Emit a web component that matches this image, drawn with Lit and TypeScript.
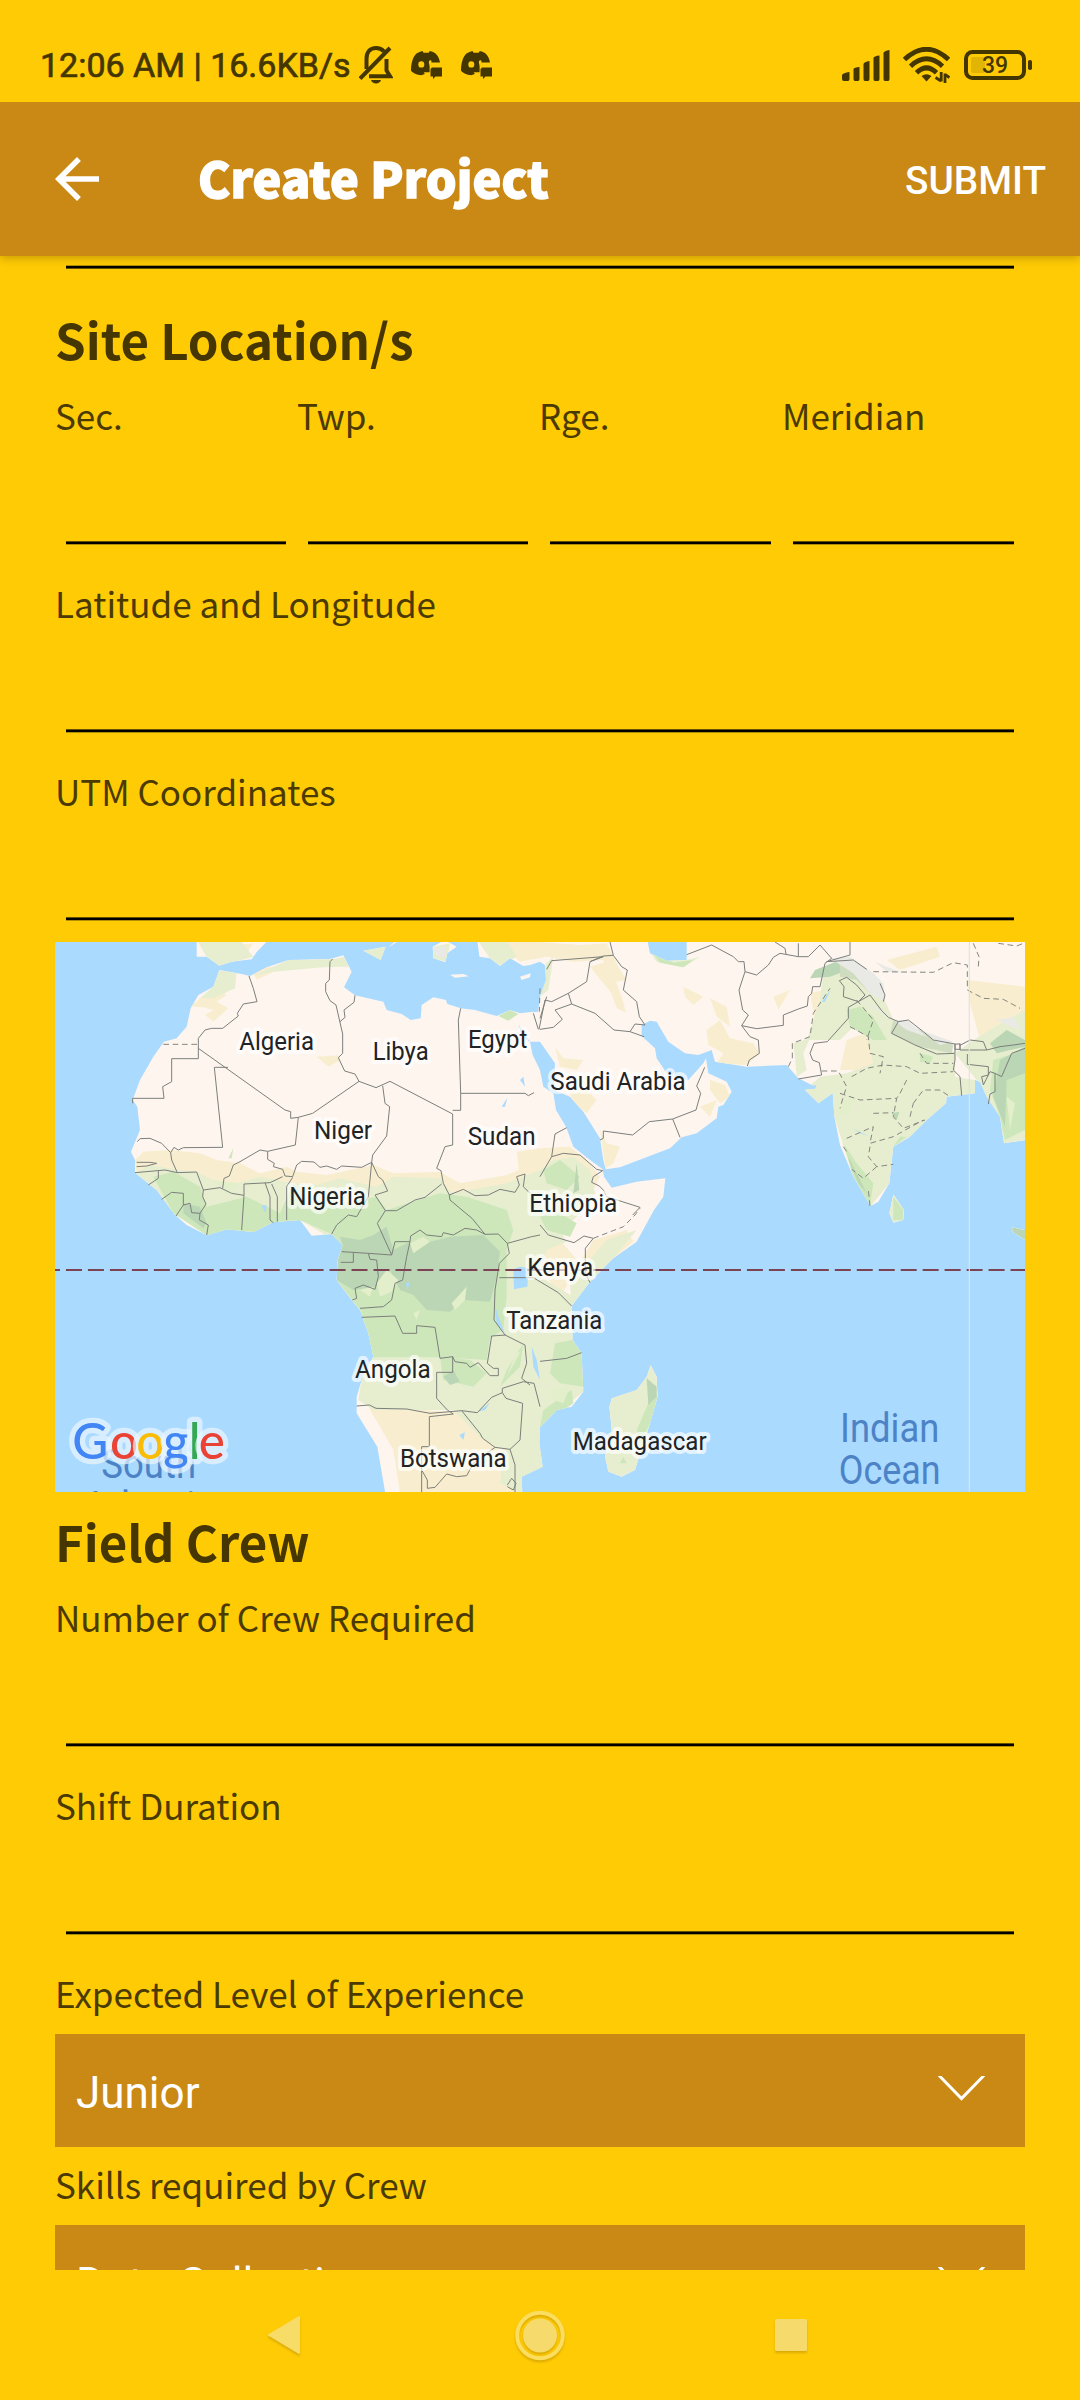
import { LitElement, html, svg, css } from "lit";
import { customElement, property } from "lit/decorators.js";

type Label = [text: string, x: number, y: number, width: number];

const COUNTRIES: Label[] = [
  ["Algeria", 598, 360, 224],
  ["Libya", 998, 390, 168],
  ["Egypt", 1284, 354, 178],
  ["Niger", 822, 627, 174],
  ["Sudan", 1283, 645, 204],
  ["Nigeria", 748, 825, 230],
  ["Saudi Arabia", 1531, 480, 406],
  ["Ethiopia", 1468, 846, 264],
  ["Kenya", 1462, 1038, 198],
  ["Tanzania", 1399, 1196, 288],
  ["Angola", 945, 1344, 227],
  ["Botswana", 1080, 1611, 320],
  ["Madagascar", 1598, 1560, 402],
];

const OCEANS: Label[] = [
  ["Indian", 2400, 1535, 298],
  ["Ocean", 2396, 1663, 306],
  ["South", 184, 1643, 284],
  ["Atlantic", 128, 1769, 400],
];

const LAND =
  // Africa
  "M538 120L605 132 630 138 680 112 745 90 870 87 910 76 935 125 912 172 945 196 1030 215 1040 240 1085 252 1112 270 1142 265 1145 225 1180 202 1218 210 1222 222 1262 235 1305 240 1370 258 1410 240 1440 250 1480 245 1483 262 1495 300 1500 335 1470 335 1478 375 1500 420 1510 470 1540 490 1548 540 1578 590 1600 650 1650 690 1688 718 1692 740 1715 773 1790 755 1876 745 1870 800 1842 840 1790 935 1720 985 1650 1055 1595 1128 1598 1230 1625 1270 1630 1385 1595 1430 1550 1440 1500 1492 1498 1540 1508 1610 1445 1640 1447 1690 1036 1690 1012 1550 950 1450 950 1400 968 1340 1000 1280 985 1210 960 1140 935 1110 890 1050 893 990 908 945 875 912 815 917 780 870 700 876 640 906 560 898 500 916 440 885 405 855 350 780 285 728 285 690 273 665 300 600 292 530 278 510 300 450 340 380 372 335 410 325 440 290 452 235 475 195 520 170Z" +
  // Iberia, Sicily, Greece, Crete, Cyprus
  "M470 30V80L500 80 538 107 575 95 635 88 650 66 685 30ZM970 62L1037 50 1022 90ZM1045 52L1070 30 1080 30ZM1178 50L1215 30 1250 50 1222 70 1216 97 1180 85ZM1230 134L1270 132 1287 139 1245 143ZM1440 140L1472 130 1470 142 1445 150Z" +
  // Asia with the Caspian cut out
  "M1312 30L1318 80 1350 85 1380 108 1410 85 1450 108 1470 105 1500 95 1515 105 1518 150 1500 200 1494 245 1480 247 1495 300 1500 335 1545 400 1542 480 1590 500 1630 545 1680 625 1690 690 1697 718 1740 712 1890 655 1925 622 1970 610 2030 565 2035 530 2050 525 2075 485 2060 455 2005 430 1998 385 1990 400 1945 450 1890 445 1850 385 1845 355 1805 318 1805 285 1830 272 1850 275 1885 335 1935 370 1975 375 2015 360 2025 395 2120 410 2240 405 2275 445 2320 467 2295 480 2335 520 2378 490 2383 560 2400 645 2440 740 2475 800 2492 828 2515 815 2548 760 2560 650 2610 620 2660 570 2718 520 2720 500 2805 490 2805 450 2820 455 2840 500 2880 560 2892 640 2960 630V30H1940V90L1880 92 1830 70 1822 30Z" +
  // Sri Lanka, Sumatra, Madagascar
  "M2560 793L2592 840 2590 870 2560 878 2548 850ZM2915 892L2955 900V930L2918 906Z" +
  "M1832 1305L1850 1340 1853 1400 1830 1480 1785 1620 1745 1640 1705 1625 1695 1580 1715 1500 1708 1430 1715 1405 1790 1380 1820 1340Z";

const SAND =
  "M452 230L480 205 540 180 560 195 530 215 565 235 520 275 495 255 520 240 490 232ZM640 130L680 112 790 106 700 125 650 150ZM830 380L895 376 900 392 865 410ZM590 45L640 40 620 70 580 66Z" +
  "M285 690L310 665 390 660 480 670 530 690 600 700 660 730 740 710 770 725 860 735 1000 705 1060 730 1200 725 1260 760 1400 735 1436 720 1430 665 1500 655 1590 650 1640 690 1680 740 1650 800 1500 820 1250 800 1000 830 700 790 450 760 290 730Z" +
  "M1625 990L1660 930 1760 900 1780 935 1720 985 1640 1000ZM1480 950L1560 930 1620 1000 1560 1100 1500 1010Z" +
  "M985 1430L1150 1440 1300 1450 1340 1500 1440 1560 1430 1690 1080 1690 1060 1560Z" +
  "M1380 36L1500 36 1620 45 1700 40 1740 120 1760 150 1700 160 1690 90 1600 95 1520 80 1440 95ZM1650 110L1700 95 1730 160 1755 230 1740 220 1690 160ZM1545 350L1570 385 1630 390 1610 420 1560 410ZM1590 490L1640 480 1670 510 1640 550 1600 520ZM1680 600L1700 640 1740 650 1720 700 1697 715ZM1930 170L1990 200 1960 225 1935 200ZM2000 300L2040 270 2070 325 2140 340 2160 370 2120 405 2030 400 2050 370 2005 345ZM2010 205L2060 230 2070 290 2030 260ZM1710 180L1740 200 1760 250 1730 235ZM2200 200L2250 180 2215 240ZM2310 190L2420 165 2400 200 2330 300ZM2420 330L2500 300 2500 420 2400 420ZM2540 90L2690 50 2700 80 2580 120ZM2780 150L2955 170 2955 300 2820 330 2790 220ZM2010 450L2055 465 2070 500 2040 520 2010 480ZM1980 530L2030 510 2010 560Z";

const PALE =
  "M520 170L538 120 590 130 585 175 520 205 480 205ZM640 138L745 90 880 87 920 80 925 110 850 112 700 125ZM470 30L600 30 640 80 538 107 500 80ZM970 62L1037 50 1022 90ZM1180 50L1230 40 1220 95 1180 85ZM1312 30L1400 30 1430 80 1380 108 1350 85ZM1518 100L1540 80 1525 180 1500 200Z" +
  "M285 728L330 705 420 720 470 725 560 770 660 740 760 760 830 765 900 745 1010 770 1060 740 1200 745 1235 790 1400 760 1500 720 1540 690 1600 680 1650 720 1665 790 1640 830 1600 870 1540 870 1580 935 1520 960 1500 1040 1600 1100 1598 1230 1630 1385 1500 1492 1508 1610 1440 1690 1380 1660 1390 1560 1320 1520 1240 1440 1000 1440 955 1410 985 1210 890 1050 908 945 780 870 640 906 500 916 400 850Z" +
  "M1640 1000L1700 930 1790 900 1720 985 1595 1128 1590 1060Z" +
  "M2300 330L2340 210 2350 130 2400 90 2470 120 2530 200 2560 270 2700 330 2745 370 2745 440 2805 450V490L2718 520 2610 620 2560 650 2548 760 2492 828 2440 740 2383 560 2378 490 2335 520 2295 480 2340 440 2420 430 2500 400 2480 320 2440 290 2400 330ZM2260 340L2310 325 2290 370 2300 420 2270 440 2265 380Z" +
  "M2745 370L2800 330 2850 300 2955 240 2955 630 2892 640 2840 500 2810 450ZM1832 70L1880 92 1940 90 1980 80 1930 112 1850 95Z" +
  "M1832 1305L1850 1340 1853 1400 1830 1480 1785 1620 1745 1640 1705 1625 1695 1580 1715 1500 1708 1430 1715 1405 1790 1380ZM2560 793L2592 840 2590 870 2560 878 2548 850Z";

const GREEN =
  "M340 740L400 725 480 770 500 830 620 800 720 850 760 760 850 830 1010 800 1040 840 1200 790 1280 800 1400 840 1420 900 1400 960 1400 1100 1390 1200 1350 1225 1340 1290 1200 1282 985 1282 985 1210 960 1140 890 1050 908 945 875 912 780 870 640 906 500 916 400 850Z" +
  "M1200 1280L1290 1290 1340 1330 1300 1370 1210 1350ZM1400 1320L1450 1240 1440 1310 1380 1370ZM1545 1240L1598 1230 1625 1270 1630 1370 1560 1360 1530 1330ZM1510 1440L1595 1380 1600 1420 1500 1490ZM1510 720L1560 690 1620 740 1580 780 1520 760ZM1500 860L1560 850 1610 880 1590 920 1520 900Z" +
  "M2420 240L2460 230 2500 260 2540 330 2500 330 2430 290ZM2640 370L2680 380 2670 400 2640 395ZM2410 640L2450 700 2500 760 2490 828 2440 740ZM2860 390L2955 360 2955 600 2895 630 2880 560 2850 480ZM2560 650L2600 620 2580 620ZM1835 65L1900 98 1960 90 1930 112 1860 98ZM1375 258L1410 240 1435 252 1405 272ZM1830 1350L1853 1400 1830 1480 1800 1540 1790 1500 1825 1420ZM2560 800L2590 840 2588 870 2560 870ZM565 685L580 655 575 685ZM1740 1600L1750 1580 1760 1600Z";

const FOREST =
  "M900 920L960 930 1000 915 1040 890 1060 960 1100 940 1170 935 1230 920 1330 915 1380 965 1370 1040 1350 1115 1270 1110 1230 1145 1160 1140 1120 1095 1080 1080 1050 1020 1010 1070 940 1080 890 1050 893 990 908 945Z" +
  "M430 820L480 830 500 880 490 895 430 850ZM1210 1340L1240 1320 1260 1355 1230 1365ZM2325 120L2400 90 2450 110 2370 140 2310 145ZM2850 340L2900 300 2955 330V350L2870 370ZM2880 390L2955 350 2955 430 2900 450 2895 590 2860 500ZM2425 680L2480 790 2455 760 2430 700ZM1820 1345L1850 1370 1850 1400 1825 1425ZM2555 550L2578 545 2570 570ZM1600 790L1610 700 1618 780ZM2915 892L2955 900V930L2918 906Z";

const HILLS = "M2560 270L2640 300 2740 345 2735 370 2640 350 2550 310ZM2400 85L2480 115 2530 200 2490 190 2450 150 2400 140Z";

const SNOW =
  "M2370 85L2430 80 2500 130 2530 160 2535 215 2490 190 2440 130ZM2505 95L2540 110 2590 128 2540 125ZM2870 270L2920 262 2945 300 2900 285ZM2450 200L2530 245 2560 265 2510 240ZM2640 300L2740 335 2700 345ZM2560 270L2600 270 2660 320 2600 300ZM1180 55L1215 50 1222 80 1190 80Z";

const CLEARINGS =
  "M1010 1060L1040 1020 1075 1050 1055 1085 1020 1100ZM1110 940L1150 920 1170 935 1120 970ZM1235 1120L1280 1070 1275 1110 1245 1140ZM960 1080L1000 1070 990 1100ZM520 750L600 760 560 790ZM1120 1150L1140 1140 1130 1170ZM1440 1270L1400 1340 1430 1260ZM1530 1380L1590 1370 1570 1420 1540 1410ZM2400 520L2440 500 2430 550 2400 560ZM2900 500L2925 520 2910 600Z";

const BORDERS =
  // north and west Africa
  "M627 138L640 175 651 215 610 222 592 250 595 258 548 295H515L495 300 475 325V386H395V455L368 470 372 505H278V520M475 355L735 540 752 545V565L775 562 818 550 957 454 945 432 914 423 895 383 908 370V312L888 225 870 212 857 185V160L868 150 870 95 878 87M945 196L942 217 912 240 915 262 900 275M957 454L1008 473 1050 454 1238 552V645L1215 650 1190 715 1203 722 1210 760 1228 795M1262 235L1255 270 1262 490V541H1238M1262 490H1455L1465 497 1482 488M1028 467L1035 520 1049 530 1040 618 998 675 995 697" +
  "M564 412H523L548 652 430 653 415 660 402 652 392 668M292 635L300 626 330 625 365 640 392 668 395 690 412 728 375 720 285 728M775 562L766 645 683 664 660 660 600 695 580 705 568 738 552 745 548 775M683 664V688L703 700 700 710 728 718 735 738 758 740 770 705 785 694 822 696 840 712 860 708 890 718 905 708 965 712 995 697 1015 740 1028 750 1043 783 1005 795 1036 842 1070 842 1125 810 1155 802 1205 762M412 728L470 726 490 780 540 773 575 790 612 796V762L690 758 728 740M612 796L605 900M675 758L690 800V870L700 878M695 762L712 800V875M758 742L740 770V870M490 780L488 800 498 822 480 850 478 870 505 885 500 915M365 808L395 787 430 790 430 825 450 820 455 848 480 850M430 825L408 858M290 697H330L350 700 320 708 290 710M325 765L355 745V722M995 697L985 800 950 860 925 855 890 885 875 912" +
  // central and southern Africa
  "M1036 842L1012 880 1055 975 985 970 905 965M1228 795L1245 788 1270 778 1305 797 1345 795 1380 778 1425 787 1438 765 1430 740 1455 732 1450 770 1470 790M1228 795L1230 810 1297 866 1335 913 1375 912 1402 940 1475 920 1500 915M1055 975L1065 935H1110L1100 980 1088 1050 1065 1060 1055 1110 1030 1130 960 1135M1110 935L1112 918 1140 900 1160 915 1205 920 1210 908 1240 915 1275 895 1310 900 1335 913M1402 940L1408 970 1378 1000 1365 1080 1362 1170 1395 1215 1455 1245 1460 1300 1445 1345 1470 1365M902 997H940V968M985 970L990 988 1010 990 1015 1040 1005 1078 970 1065 945 1075 950 1105 937 1110M965 1162L1065 1158 1088 1210H1130V1187L1185 1192 1200 1285 1238 1280V1327H1190V1405L1222 1440M1238 1280L1245 1295 1280 1300 1290 1312 1315 1298 1350 1337H1375V1315H1360L1342 1300 1355 1218 1397 1215M950 1428L988 1425 1008 1435 1100 1437 1170 1450 1265 1442 1312 1448 1355 1402 1387 1388V1375L1450 1355 1482 1360 1500 1430M1387 1388L1398 1405 1448 1420 1440 1530 1410 1558 1365 1552 1328 1525 1320 1510 1265 1442M1222 1440L1240 1452 1168 1460V1550H1145V1690M1145 1620L1162 1650V1675L1185 1672 1220 1632 1250 1640 1280 1637 1300 1600 1365 1552M1410 1558L1425 1605V1690M1378 1043H1480L1500 1055 1555 1088 1595 1128M1500 1294L1580 1285 1625 1268M1402 1665L1415 1645 1428 1660 1420 1680 1402 1670" +
  // horn of Africa
  "M1500 885L1525 915 1602 938 1632 918 1660 925 1636 955V1030L1650 1058M1500 740L1535 680 1570 670 1620 675 1670 718 1688 722 1660 740 1655 757 1678 768 1690 780 1700 800 1800 832 1778 855M1535 680L1545 612 1580 593" +
  // middle east
  "M1480 250L1495 298M1497 298L1515 210 1535 215 1585 190 1640 155 1650 95 1690 78 1720 76 1710 36M1650 95L1690 80 1535 92 1520 118M1585 190L1595 222 1545 240 1567 268 1540 292 1500 298M1595 222L1665 250 1722 300 1770 305 1812 320M1770 305L1785 282 1815 285M1720 76L1745 110 1762 120 1750 180 1790 215 1798 260 1815 285M1994 412L1970 468 1982 490 1968 540 1898 567 1828 575 1778 615 1690 603V625L1680 630M1898 567L1920 622M1940 74L2015 45 2080 80 2095 95H2112L2115 125 2097 180 2108 240 2125 255 2105 287 2130 320 2155 330 2158 370 2128 390 2122 408M2115 125L2150 135 2185 105 2200 82 2220 70 2275 80 2275 40M2105 287L2150 296 2230 286V255L2275 237 2302 228 2305 200 2315 190 2318 170H2340L2355 100 2375 85 2340 45 2305 80 2275 80M2205 36L2235 55 2238 72M2430 36L2430 75 2360 95 2440 90 2480 118M2275 447L2345 435 2338 398 2318 390 2310 370 2322 340 2362 335 2425 265V232L2490 195 2525 242 2545 262M2398 152L2420 142 2450 165 2475 195 2455 215 2410 200 2412 170 2398 152M1500 265L1520 200M2520 160L2535 195 2530 215" +
  // Himalaya and Bengal
  "M2545 262L2575 275 2605 270 2650 305 2680 330 2745 342V370L2690 372 2625 345 2555 310 2575 275M2745 372V390L2740 420 2760 440 2765 497M2760 340V360H2840L2830 335 2790 330 2762 345M2745 342H2760V358H2745ZM2782 372V403L2845 410 2845 435 2825 440 2830 465 2850 425 2865 430V485L2850 492 2845 522M2840 360L2880 350 2920 345 2955 340M2865 430L2885 440 2915 370 2955 355";

const DASHED =
  "M370 343H475M1660 925L1750 890 1785 855 1800 835M2500 125L2680 127 2740 98 2782 105V180L2830 205 2890 208 2940 235M2800 40L2817 80 2815 110M2875 40L2930 48 2955 38M2245 410L2257 385V340L2310 320 2320 250 2370 175M2345 423H2395L2420 470 2410 500 2400 535M2400 490L2460 510 2570 505 2560 560 2590 595 2655 570M2430 290L2485 320 2490 370 2530 380 2520 430M2435 440L2480 415 2530 405 2600 410 2640 430 2740 425M2600 450L2580 490 2570 505M2620 520L2650 480 2700 480 2730 500M2500 550L2560 548M2420 625L2500 590 2490 640 2560 620 2650 570M2490 650L2485 680 2510 710 2560 703M2510 710L2470 745 2435 718M2490 828L2485 780M2640 370L2660 400 2740 400M2410 650L2420 665M2450 210L2500 270 2480 330M2610 560L2620 520M1500 175L1498 245";

@customElement("world-map")
export class WorldMap extends LitElement {
  static styles = css`
    :host { display: block; height: 550px; }
    .map { display: block; width: 100%; height: 100%; }
    .country {
      font: 400 77px Roboto, sans-serif;
      fill: #212325;
      stroke: rgba(255, 255, 255, 0.68);
      stroke-width: 24px;
      stroke-linejoin: round;
      paint-order: stroke;
    }
    .ocean { font: 400 124px Roboto, sans-serif; fill: #4c83c6; }
    .logo {
      font: 500 148px Lato, sans-serif;
      stroke: rgba(235, 246, 255, 0.7);
      stroke-width: 32px;
      stroke-linejoin: round;
      paint-order: stroke;
    }
  `;

  render() {
    const label = (cls: string) => ([text, x, y, width]: Label) => svg`
      <text class=${cls} x=${x} y=${y} textLength=${width} lengthAdjust="spacingAndGlyphs">${text}</text>`;
    return html`
      <svg class="map" viewBox="45 36 2910 1650" preserveAspectRatio="none">
        <defs><clipPath id="land"><path d=${LAND} /></clipPath></defs>
        <rect x="45" y="36" width="2910" height="1650" fill="#abdaff" />
        <path d=${LAND} fill="#fef5ef" />
        <g clip-path="url(#land)">
          <path d=${SAND} fill="#f8eecf" />
          <path d=${PALE} fill="#e6eecf" />
          <path d=${GREEN} fill="#cde7bb" />
          <path d=${FOREST} fill="#bbd6b4" />
          <path d=${CLEARINGS} fill="#e3eecb" />
          <path d=${HILLS} fill="#d0dcc0" />
          <path d=${SNOW} fill="#e9eae5" />
        </g>
        <path
          fill="#abdaff"
          d="M1420 1018L1440 1010 1466 1015 1462 1070 1422 1078ZM1365 1125L1375 1160 1395 1210 1370 1180ZM1475 1250L1490 1290 1500 1350 1480 1310ZM1440 450L1450 440 1455 470ZM1385 530L1402 503 1395 530ZM1437 285L1447 300 1470 335 1445 320ZM665 828L680 825 677 850ZM1258 1515L1275 1507 1270 1530ZM1315 1445L1350 1418 1335 1440ZM1097 1060L1110 1057 1103 1080ZM2345 215L2372 180 2355 215ZM2440 597L2485 618 2460 610ZM2295 468L2330 466 2325 476 2295 478Z"
        />
        <path d=${BORDERS} fill="none" stroke="#7c7f7b" stroke-width="3" stroke-linejoin="round" />
        <path d=${DASHED} fill="none" stroke="#85867f" stroke-width="3" stroke-dasharray="17 11" />
        <path d="M12 1020H2960" stroke="#7b4354" stroke-width="6" stroke-dasharray="48 17.9" />
        <path d="M2788 36V1686" stroke="#dde3e6" stroke-width="3.500" />
        ${COUNTRIES.map(label("country"))}
        ${OCEANS.map(label("ocean"))}
        <text class="logo" y="1587"
          ><tspan x="97" fill="#4285f4">G</tspan
          ><tspan x="210" fill="#ea4335">o</tspan
          ><tspan x="289" fill="#fbbc05">o</tspan
          ><tspan x="370" fill="#4285f4">g</tspan
          ><tspan x="446" fill="#34a853">l</tspan
          ><tspan x="476" fill="#ea4335">e</tspan
        ></text>
      </svg>
    `;
  }
}

@customElement("text-field")
export class TextField extends LitElement {
  @property() label = "";

  static styles = css`
    :host { display: block; height: 188px; box-sizing: border-box; padding-top: 12px; }
    .label {
      height: 50px;
      line-height: 50px;
      font-size: 35px;
      color: #4b3a02;
      white-space: nowrap;
    }
    .input {
      height: 105px;
      margin: 0 11px;
      box-sizing: border-box;
      padding-top: 101px;
    }
    .line {
      height: 4px;
      background: linear-gradient(rgba(0, 0, 0, 0.6) 25%, #000 25% 75%, rgba(0, 0, 0, 0.3) 75%);
    }
  `;

  render() {
    return html`
      <div class="label">${this.label}</div>
      <div class="input"><div class="line"></div></div>
    `;
  }
}

@customElement("select-field")
export class SelectField extends LitElement {
  @property() label = "";
  @property() value = "";

  static styles = css`
    :host { display: block; height: 191px; box-sizing: border-box; padding-top: 12px; }
    .label {
      height: 66px;
      line-height: 50px;
      font-size: 35px;
      color: #4b3a02;
      white-space: nowrap;
    }
    .box {
      height: 113px;
      box-sizing: border-box;
      padding: 5px 40px 0 21px;
      background: #ca8815;
      display: flex;
      align-items: center;
      justify-content: space-between;
      font: 400 44px Roboto, sans-serif;
      color: #fff;
    }
    .chevron { width: 47px; height: 25px; margin-bottom: 10px; }
  `;

  render() {
    return html`
      <div class="label">${this.label}</div>
      <div class="box">
        <span>${this.value}</span>
        <svg class="chevron" viewBox="0 0 47 25">
          <path d="M1 -.5L23.5 22.5 46 -.5" fill="none" stroke="#fff" stroke-width="3" />
        </svg>
      </div>
    `;
  }
}

@customElement("app-root")
export class AppRoot extends LitElement {
  static styles = css`
    :host {
      display: flex;
      flex-direction: column;
      height: 2400px;
      overflow: hidden;
      background: #ffcb05;
      font-family: "Noto Sans CJK SC", "Noto Sans", sans-serif;
    }
    .status {
      flex: none;
      height: 102px;
      box-sizing: border-box;
      padding: 28px 48px 0 40px;
      display: flex;
      align-items: center;
      color: #443600;
    }
    .clock { font: 400 34px Roboto, sans-serif; white-space: nowrap; width: 319px; -webkit-text-stroke: 0.7px #443600; }
    .bell { width: 34px; height: 38px; margin-right: 18px; }
    .chat { width: 31px; height: 28px; margin-right: 19px; }
    .system { margin-left: auto; display: flex; align-items: center; }
    .signal { width: 48px; height: 31px; margin-right: 13px; }
    .wifi { width: 47px; height: 36px; margin-right: 14px; }
    .battery { width: 68px; height: 30px; }
    .percent { font: 500 23px Roboto, sans-serif; }
    .appbar {
      flex: none;
      height: 154px;
      box-sizing: border-box;
      padding: 0 34px 0 44px;
      display: flex;
      align-items: center;
      background: #ca8815;
      color: #fff;
      box-shadow: 0 2px 9px rgba(90, 60, 0, 0.35);
      clip-path: inset(0 0 -16px 0);
      z-index: 1;
    }
    .back { width: 66px; height: 66px; margin-right: 88px; }
    .title {
      flex: 1;
      font-size: 48.5px;
      font-weight: 900;
      letter-spacing: 0.12px;
      line-height: 70px;
      padding-bottom: 5px;
      -webkit-text-stroke: 1.4px #fff;
    }
    .submit { font: 500 38.7px/50px Roboto, sans-serif; padding-top: 3px; }
    .form {
      flex: 1;
      min-height: 0;
      overflow: hidden;
      padding: 0 55px;
    }
    .tail { height: 34px; box-sizing: border-box; padding: 9px 11px 0; }
    .line {
      height: 4px;
      background: linear-gradient(rgba(0, 0, 0, 0.3) 25%, #000 25% 75%, rgba(0, 0, 0, 0.6) 75%);
    }
    .heading {
      height: 88px;
      box-sizing: border-box;
      padding-top: 11px;
      margin: 0;
      font-size: 49.2px;
      line-height: 75px;
      font-weight: 700;
      color: #463702;
    }
    .legal { display: grid; grid-template-columns: 242px 242px 243px 243px; }
    .nav { flex: none; height: 130px; display: flex; justify-content: center; align-items: center; gap: 214px; }
    .key { width: 36px; height: 56px; overflow: visible; filter: drop-shadow(0 2px 1px rgba(150, 110, 0, 0.35)); }
    .home { width: 50px; }
    .recent { margin: 0 6px 0 -6px; }
  `;

  private chatIcon() {
    return html`
      <svg class="chat" viewBox="0 0 31 28" fill="#443600">
        <path
          fill-rule="evenodd"
          d="M9 .7L11.5 0 12.6 1.8H17.6L18.8 0 21.5 .7C25.5 2 28.3 6.500 29 11.500H20.500C20.800 9.200 19.300 9 18.600 9.600 17 11 18.600 13.500 18.600 15.500V21.200H12.800L13.800 23 10.200 24.200C6 24 1.500 22 0 19.500 0 12 2.200 5 5.500 2.500ZM10.300 10.200A2.900 3.100 0 1 0 10.300 16.600 2.900 3.100 0 1 0 10.300 10.200Z"
        />
        <path d="M21 16.500H31V25.500H24.500L22 28V25.500H19.500V18Z" />
      </svg>
    `;
  }

  render() {
    return html`
      <div class="status">
        <span class="clock">12:06 AM | 16.6KB/s</span>
        <svg class="bell" viewBox="0 0 34 38" fill="none" stroke="#443600" stroke-width="4">
          <path d="M1 32.500L31 2" />
          <path d="M7.500 23V13C7.500 6 11 2 17 2 20.500 2 23 3.200 25 5.500" />
          <path d="M10 30.200H31L27.500 24.500V13" />
          <path d="M12 34H22C21 38.500 13 38.500 12 34Z" fill="#443600" stroke="none" />
        </svg>
        ${this.chatIcon()}${this.chatIcon()}
        <div class="system">
          <svg class="signal" viewBox="0 0 48 31" fill="#443600">
            <path
              d="M0 25Q1 23 7.500 22V29Q7.500 31 6 31H2Q0 31 0 29ZM11.500 19Q12 17.500 17.500 17V29Q17.500 31 16 31H13Q11.500 31 11.500 29ZM21.500 14Q22 12 27.500 11V29Q27.500 31 26 31H23Q21.500 31 21.500 29ZM31.500 8Q32 6 37.500 5.500V29Q37.500 31 36 31H33Q31.500 31 31.500 29ZM41.500 3Q42 1 47.500 0V29Q47.500 31 46 31H43Q41.500 31 41.500 29Z"
            />
          </svg>
          <svg class="wifi" viewBox="0 0 47 36" fill="none" stroke="#443600" stroke-width="4.800">
            <path d="M1.500 12.500Q23.500 -8 45.500 12.500" />
            <path d="M7.500 19.200Q23.500 4.500 39.500 19.200" />
            <path d="M13.500 25.700Q23.500 16 33.500 25.700" />
            <path d="M18.500 29Q23.500 25.500 28.500 29L23.500 34.500Z" fill="#443600" stroke="none" />
            <path d="M38.200 25V34.500M32.500 30.500L38 34M42 36V26.500M42 27.500L46.500 30.500" stroke-width="2.800" />
          </svg>
          <svg class="battery" viewBox="0 0 68 30">
            <rect x="2" y="2" width="58" height="26" rx="6.500" fill="none" stroke="#443600" stroke-width="4" />
            <rect x="7" y="7" width="14" height="16" rx="2" fill="#e2b505" />
            <rect x="64" y="10" width="4" height="10" rx="1.800" fill="#443600" />
            <text class="percent" x="31" y="23.300" text-anchor="middle" fill="#443600">39</text>
          </svg>
        </div>
      </div>
      <div class="appbar">
        <svg class="back" viewBox="0 0 24 24" fill="#fff">
          <path d="M20 11H7.830l5.590-5.590L12 4l-8 8 8 8 1.410-1.410L7.830 13H20v-2z" />
        </svg>
        <span class="title">Create Project</span>
        <span class="submit">SUBMIT</span>
      </div>
      <div class="form">
        <div class="tail"><div class="line"></div></div>
        <h2 class="heading">Site Location/s</h2>
        <div class="legal">
          ${["Sec.", "Twp.", "Rge.", "Meridian"].map((l) => html`<text-field .label=${l}></text-field>`)}
        </div>
        <text-field label="Latitude and Longitude"></text-field>
        <text-field label="UTM Coordinates"></text-field>
        <world-map></world-map>
        <h2 class="heading">Field Crew</h2>
        <text-field label="Number of Crew Required"></text-field>
        <text-field label="Shift Duration"></text-field>
        <select-field label="Expected Level of Experience" value="Junior"></select-field>
        <select-field label="Skills required by Crew" value="Data Collection"></select-field>
      </div>
      <div class="nav">
        <svg class="key" viewBox="0 0 36 56"><path d="M34 10V46L4 28Z" fill="#f8dc68" stroke="#f8dc68" stroke-width="2" stroke-linejoin="round" /></svg>
        <svg class="key home" viewBox="0 0 50 56">
          <circle cx="25" cy="28.500" r="22.800" fill="none" stroke="#fbdd5f" stroke-width="4" />
          <circle cx="25" cy="28.500" r="17" fill="#f6db6c" />
        </svg>
        <svg class="key recent" viewBox="0 0 36 56"><rect x="2" y="12" width="32" height="32" rx="1.500" fill="#f6db6c" /></svg>
      </div>
    `;
  }
}
